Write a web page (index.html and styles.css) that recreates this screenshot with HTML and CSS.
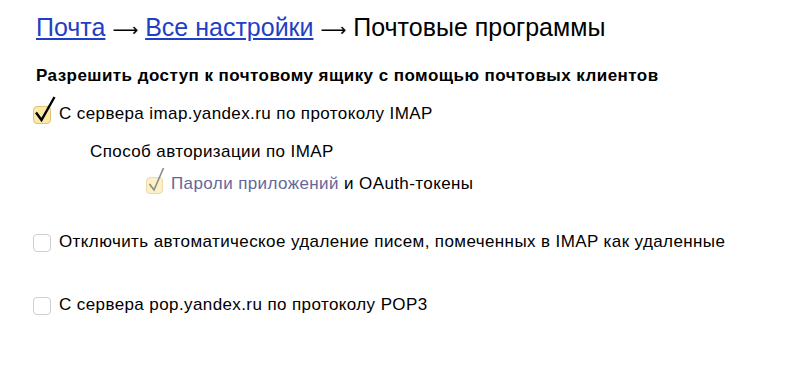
FILE: index.html
```html
<!DOCTYPE html>
<html lang="ru">
<head>
    <meta charset="UTF-8">
    <title>Почтовые программы</title>
    <link rel="stylesheet" href="styles.css">
</head>
<body>
    <div class="page">
        <h1 class="crumbs">
            <a href="#">Почта</a> <span class="arrow">⟶</span> <a href="#">Все настройки</a> <span class="arrow">⟶</span> Почтовые программы
        </h1>

        <div class="section-title">Разрешить доступ к почтовому ящику с помощью почтовых клиентов</div>

        <label class="option option-imap">
            <span class="box box-checked">
                <svg class="tick" width="26" height="30" viewBox="0 0 26 30">
                    <path d="M3 16.5 L8.5 24 L21.5 1" fill="none" stroke="#000" stroke-width="2.4"/>
                </svg>
            </span>
            <span>С сервера imap.yandex.ru по протоколу IMAP</span>
        </label>

        <div class="sub">
            <div class="sub-title">Способ авторизации по IMAP</div>
            <label class="option option-auth">
                <span class="box box-checked box-muted">
                    <svg class="tick" width="26" height="30" viewBox="0 0 26 30">
                        <path d="M3.5 17 L8 23 L17.5 1" fill="none" stroke="#8a8a8a" stroke-width="1.6"/>
                    </svg>
                </span>
                <span><a href="#" class="visited">Пароли приложений</a> и OAuth-токены</span>
            </label>
        </div>

        <label class="option option-delete">
            <span class="box"></span>
            <span>Отключить автоматическое удаление писем, помеченных в IMAP как удаленные</span>
        </label>

        <label class="option option-pop">
            <span class="box"></span>
            <span>С сервера pop.yandex.ru по протоколу POP3</span>
        </label>
    </div>
</body>
</html>
```

FILE: styles.css
```css
body {
    margin: 0;
    font-family: "Liberation Sans", Arial, sans-serif;
    color: #000;
    background: #fff;
}
.page {
    padding: 9px 0 0 36px;
}
.crumbs {
    margin: 0;
    font-size: 25px;
    font-weight: normal;
    line-height: 36px;
    height: 36px;
}
.crumbs a {
    color: #1f3fc5;
}
.arrow {
    font-family: "DejaVu Sans", sans-serif;
    font-size: 18px;
    line-height: 1;
}
.section-title {
    margin-top: 20px;
    font-size: 17px;
    font-weight: bold;
    line-height: 22px;
    letter-spacing: 0.45px;
}
.option {
    display: flex;
    align-items: center;
    font-size: 17px;
    line-height: 22px;
    letter-spacing: 0.4px;
}
.box {
    position: relative;
    flex: none;
    box-sizing: border-box;
    width: 18px;
    height: 18px;
    border: 1px solid #cfcfcf;
    border-radius: 4px;
    margin: 2px 8px 0 -3px;
}
.box-checked {
    background: #fde9a6;
    border-color: #dec27a;
}
.box-muted {
    width: 17px;
    height: 17px;
    background: #fdf0c6;
    border-color: #eadba8;
    margin-left: 0;
}
.tick {
    position: absolute;
    left: -1px;
    top: -11px;
}
.option-imap {
    margin-top: 16px;
}
.sub {
    padding-left: 54px;
    margin-top: 16px;
}
.sub-title {
    font-size: 17px;
    line-height: 22px;
    letter-spacing: 0.4px;
}
.option-auth {
    margin: 10px 0 0 56px;
}
.visited {
    color: #66669a;
    text-decoration: none;
}
.option-delete {
    margin-top: 36px;
}
.option-pop {
    margin-top: 41px;
}
```
